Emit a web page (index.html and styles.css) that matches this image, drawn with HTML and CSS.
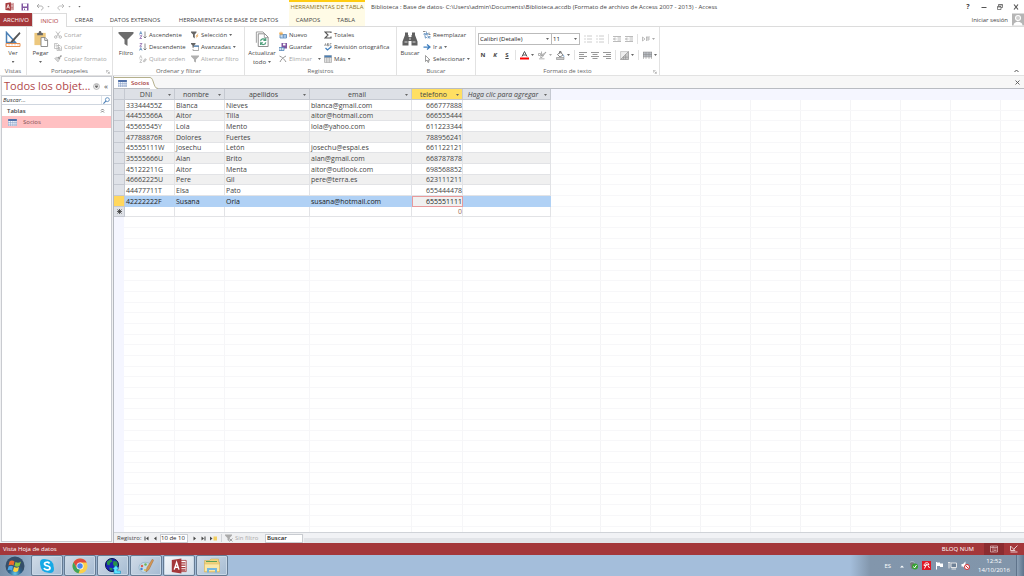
FILE: index.html
```html
<!DOCTYPE html>
<html lang="es">
<head>
<meta charset="utf-8">
<title>Biblioteca - Access</title>
<link rel="stylesheet" href="styles.css">
</head>
<body>
<svg class="defs" aria-hidden="true">
  <symbol id="i-access" viewBox="0 0 20 20"><path d="M12 3h7v14h-7z" fill="#fff" stroke="#a4373a"/><path d="M12 6h6M12 9h6M12 12h6M12 15h6" stroke="#a4373a" stroke-width="1.6"/><path d="M1 2.500l12-2v19l-12-2z" fill="#a4373a"/><path d="M4 14.500l3-9 3 9M5 11.500h4" fill="none" stroke="#fff" stroke-width="1.700"/></symbol>
  <symbol id="i-save" viewBox="0 0 16 16"><path d="M1 1h14v14H1z" fill="#8055a0"/><path d="M4 1h8v6H4z" fill="#fff"/><path d="M4 10h8v5H4z" fill="#fff"/><path d="M6 11h2v3H6z" fill="#8055a0"/></symbol>
  <symbol id="i-undo" viewBox="0 0 16 16"><path d="M6 2L2 6l4 4M2 6h7c7 0 6 7 1 8" fill="none" stroke="#a5a5a5" stroke-width="1.800"/></symbol>
  <symbol id="i-redo" viewBox="0 0 16 16"><path d="M10 2l4 4-4 4M14 6H7c-7 0-6 7-1 8" fill="none" stroke="#b5b5b5" stroke-width="1.800"/></symbol>
  <symbol id="i-view" viewBox="0 0 32 32"><path d="M3 3v20h18z" fill="none" stroke="#4a7fb5" stroke-width="3"/><path d="M29 2L13 19l-3 5 6-2L31 5z" fill="#555"/><path d="M2 25h28v6H2z" fill="#fff" stroke="#e88f50" stroke-width="2"/><path d="M8 26v3M14 26v3M20 26v3M26 26v3" stroke="#e88f50"/></symbol>
  <symbol id="i-paste" viewBox="0 0 32 34"><path d="M2 4h24v26H2z" fill="#edc87e"/><path d="M8 4h3c0-5 6-5 6 0h3v5H8z" fill="#666"/><path d="M16 14h9l5 5v14H16z" fill="#fff" stroke="#888" stroke-width="2"/><path d="M24 14v6h6" fill="none" stroke="#888" stroke-width="2"/></symbol>
  <symbol id="i-cut" viewBox="0 0 16 16"><path d="M4 1l7 10M12 1L5 11" stroke="#aaa" stroke-width="1.500"/><g fill="none" stroke="#aaa" stroke-width="1.500"><circle cx="3.500" cy="12" r="2.500"/><circle cx="12.500" cy="12" r="2.500"/></g></symbol>
  <symbol id="i-copy" viewBox="0 0 16 16"><g fill="#fff" stroke="#aaa" stroke-width="1.300"><path d="M1 1h6l2 2v8H1zM6 5h6l3 3v7H6z"/><path d="M3 4h3M3 6h2M8 9h4M8 11h5M8 13h5"/></g></symbol>
  <symbol id="i-brush" viewBox="0 0 16 16"><path d="M1 7l5-3 5 5-3 5z" fill="#d5d5d5" stroke="#b0b0b0"/><path d="M7 5l3-2 3 3-2 3z" fill="#999"/><path d="M12 4l3-3" stroke="#999" stroke-width="3"/></symbol>
  <symbol id="i-funnel" viewBox="0 0 32 32"><path d="M1 2h30v3L19 17v13l-6-4v-9L1 5z" fill="#6d6d6d"/></symbol>
  <symbol id="i-asc" viewBox="0 0 16 16"><path d="M1 7l2.500-6L6 7M2 5h3" fill="none" stroke="#4a7fb5" stroke-width="1.400"/><path d="M1.500 9.500H6L1.500 15H6" fill="none" stroke="#8055a0" stroke-width="1.400"/><path d="M12 1v13M9 11l3 3 3-3" fill="none" stroke="#666" stroke-width="1.500"/></symbol>
  <symbol id="i-desc" viewBox="0 0 16 16"><path d="M1.500 1H6L1.500 6.500H6" fill="none" stroke="#8055a0" stroke-width="1.400"/><path d="M1 15l2.500-6L6 15M2 13h3" fill="none" stroke="#4a7fb5" stroke-width="1.400"/><path d="M12 1v13M9 11l3 3 3-3" fill="none" stroke="#666" stroke-width="1.500"/></symbol>
  <symbol id="i-unsort" viewBox="0 0 16 16"><path d="M1 7l2.500-6L6 7M1.500 9.500H6L1.500 15H6" fill="none" stroke="#b5b5b5" stroke-width="1.400"/><path d="M8 13l4-6 3 2-4 5z" fill="#ccc" stroke="#b0b0b0"/></symbol>
  <symbol id="i-fsel" viewBox="0 0 16 16"><path d="M0 1h11v2L7.500 7v8L4 12V7L0 3z" fill="#666"/><path d="M14 5l-5 6h3l-3 5 6-7h-3l3-4z" fill="#e8a04a"/></symbol>
  <symbol id="i-fadv" viewBox="0 0 16 16"><path d="M0 0h9v2L6 5v6L3 9V5L0 2z" fill="#666"/><path d="M6 6h9v9H4v-3" fill="#fff" stroke="#777" stroke-width="1.200"/><path d="M6 5h10v2.500H6z" fill="#4a7fb5"/></symbol>
  <symbol id="i-falt" viewBox="0 0 16 16"><path d="M0 1h16v2l-6 6v6l-4-2V9L0 3z" fill="#b0b0b0"/></symbol>
  <symbol id="i-refresh" viewBox="0 0 28 34"><path d="M2 25V2h14l4 4" fill="none" stroke="#999" stroke-width="2"/><path d="M6 6h14l7 7v20H6z" fill="#fff" stroke="#888" stroke-width="2"/><path d="M19 6v8h8" fill="none" stroke="#888" stroke-width="1.500"/><path d="M11 22c0-6 8-7 10-3M22 15v5h-5M22 24c-1 6-8 6-10 2M11 30v-5h5" fill="none" stroke="#4f9f7c" stroke-width="2.500"/></symbol>
  <symbol id="i-new" viewBox="0 0 16 16"><path d="M2 7h13v7H2z" fill="#c9dcf0" stroke="#4a7fb5" stroke-width="1.500"/><path d="M6 10h9M9 8v6" stroke="#4a7fb5"/><path d="M4 1v8M0 5h8M1 2l6 6M7 2L1 8" stroke="#efaa4a" stroke-width="1.400"/></symbol>
  <symbol id="i-saverec" viewBox="0 0 16 16"><path d="M5 0h11v11H5z" fill="#8055a0"/><path d="M8 1h5v4H8z" fill="#fff"/><path d="M0 9h10v6H0z" fill="#fff" stroke="#4a7fb5" stroke-width="1.500"/><path d="M1 12h9M5 9v6" stroke="#4a7fb5"/></symbol>
  <symbol id="i-del" viewBox="0 0 16 16"><path d="M1 2c5 2 10 7 13 12M14 2C8 5 4 9 2 14" fill="none" stroke="#999" stroke-width="2"/></symbol>
  <symbol id="i-sum" viewBox="0 0 16 16"><path d="M14 4V2H2l6 6-6 6h12v-3" fill="none" stroke="#555" stroke-width="2.200"/></symbol>
  <symbol id="i-abc" viewBox="0 0 16 16"><path d="M1 6l2-5 2 5M2 4h2M7 1v5h2V3.500H7V1h2v2M15 1h-3v5h3" fill="none" stroke="#666"/><path d="M3 10l4 4 8-7" fill="none" stroke="#3f7fbf" stroke-width="2.500"/></symbol>
  <symbol id="i-grid" viewBox="0 0 16 16"><path d="M1 1h14v14H1z" fill="#fff" stroke="#888"/><path d="M1 1h14v4H1z" fill="#4a7fb5"/><path d="M1 5h14M1 8h14M1 12h14M5.500 5v10M10.500 5v10" stroke="#888"/></symbol>
  <symbol id="i-find" viewBox="0 0 32 28"><path d="M6 1h6v5h1v4h6V6h1V1h6v5l5 13v8H19v-9h-6v9H1v-8L6 6z" fill="#606060"/><path d="M5 20h6M21 20h6M16 11v5" stroke="#fff" stroke-width="1.500"/></symbol>
  <symbol id="i-replace" viewBox="0 0 16 16"><path d="M2 5h3v3H2zM7 1v7h3V5H7M9 11h2v3H9M15 11h-3v3h3M4 9v4h3M5 11l2 2-2 2" fill="none" stroke="#4a7fb5" stroke-width="1.300"/><path d="M0 1h5M12 3v4h3" stroke="#666" fill="none" stroke-width="1.500"/></symbol>
  <symbol id="i-go" viewBox="0 0 16 16"><path d="M1 8h12M8 3l6 5-6 5" fill="none" stroke="#3f7fbf" stroke-width="2.500"/></symbol>
  <symbol id="i-pick" viewBox="0 0 16 16"><path d="M5 1v12l3-3 2 5 2-1-2-4h4z" fill="#fff" stroke="#777" stroke-width="1.400"/></symbol>
  <symbol id="i-list" viewBox="0 0 16 16"><path d="M1 2h2M1 8h2M1 14h2" stroke="#aaa" stroke-width="2"/><path d="M6 2h10M6 8h10M6 14h10" stroke="#bbb" stroke-width="1.500"/></symbol>
  <symbol id="i-indent" viewBox="0 0 16 16"><path d="M0 3h16M9 6h7M9 10h7M0 13h16M7 8H1M4 5L1 8l3 3" fill="none" stroke="#aaa" stroke-width="1.600"/></symbol>
  <symbol id="i-dir" viewBox="0 0 16 16"><path d="M1 4l5 4-5 4zM9 12V4M12 12V4M8 4h8M16 8h-5" fill="none" stroke="#aaa" stroke-width="1.500"/></symbol>
  <symbol id="i-fontcolor" viewBox="0 0 18 18"><path d="M4 11L9 1l5 10M6 8h6" fill="none" stroke="#555" stroke-width="2"/><path d="M0 13h18v4H0z" fill="#f00"/></symbol>
  <symbol id="i-mark" viewBox="0 0 18 18"><path d="M1 5h4v4H1zM7 1v8h3V5M16 2L8 13H5l1-3z" fill="none" stroke="#999" stroke-width="1.500"/><path d="M2 14h11v3H2z" fill="#ccc"/></symbol>
  <symbol id="i-fill" viewBox="0 0 18 18"><path d="M3 7l6-5 5 6-6 4zM7 5V1h3v4" fill="#fff" stroke="#666" stroke-width="1.600"/><path d="M14 7c3 2 3 4 2 6z" fill="#3f7fbf"/><path d="M1 13h15v4H1z" fill="#ccc" stroke="#777"/></symbol>
  <symbol id="i-al" viewBox="0 0 16 16"><path d="M0 3h16M0 7h10M0 11h16M0 15h10" stroke="#777" stroke-width="1.500"/></symbol>
  <symbol id="i-ac" viewBox="0 0 16 16"><path d="M0 3h16M3 7h10M0 11h16M3 15h10" stroke="#777" stroke-width="1.500"/></symbol>
  <symbol id="i-ar" viewBox="0 0 16 16"><path d="M0 3h16M6 7h10M0 11h16M6 15h10" stroke="#777" stroke-width="1.500"/></symbol>
  <symbol id="i-alt" viewBox="0 0 16 16"><path d="M1 1h14v14H1z" fill="#eee" stroke="#aaa"/><path d="M1 15L15 1v14z" fill="#ccc" stroke="#888"/><path d="M6 10v5M10 6v9M6 11h9" fill="none" stroke="#888"/></symbol>
  <symbol id="i-lines" viewBox="0 0 18 16"><path d="M0 1h18v10H0z" fill="#b8bcc2"/><path d="M0 1h18M0 6h18M0 11h18M6 1v14M12 1v14M1 1v14M17 1v14" stroke="#888"/></symbol>
  <symbol id="i-launch" viewBox="0 0 12 12"><path d="M1 8V1h7M4 4l6 6M10 5v5H5" fill="none" stroke="#888" stroke-width="1.500"/></symbol>
  <symbol id="i-table" viewBox="0 0 18 14"><path d="M0 0h18v14H0z" fill="#f4f8fd"/><path d="M0 0h18v4H0z" fill="#4f6fa8"/><path d="M0 7h18M0 10.500h18M5 4v10M9.500 4v10M14 4v10M.5 0v14M0 13.500h18M17.500 0v14" stroke="#8199c2"/></symbol>
  <symbol id="i-search" viewBox="0 0 16 16"><circle cx="10" cy="6" r="4.500" fill="none" stroke="#4a7fb5" stroke-width="1.800"/><path d="M7 9l-6 6" stroke="#4a7fb5" stroke-width="2.500"/></symbol>
  <symbol id="i-user" viewBox="0 0 24 24"><path d="M0 0h24v24H0z" fill="#b5b5b5"/><circle cx="12" cy="9" r="6" fill="#fff"/><path d="M3 24c0-10 18-10 18 0z" fill="#fff"/><circle cx="12" cy="9" r="4" fill="#d0d0d0"/></symbol>
</svg>

<div class="app">
  <header class="titlebar">
    <div class="quick">
      <svg class="ic s9"><use href="#i-access"/></svg>
      <button aria-label="Guardar base de datos"><svg class="ic s8"><use href="#i-save"/></svg></button>
      <button aria-label="Deshacer"><svg class="ic s8"><use href="#i-undo"/></svg><i class="caret pale"></i></button>
      <button aria-label="Rehacer"><svg class="ic s8"><use href="#i-redo"/></svg><i class="caret pale"></i></button>
      <button aria-label="Personalizar"><i class="caret"></i></button>
    </div>
    <div class="context">HERRAMIENTAS DE TABLA</div>
    <h1>Biblioteca : Base de datos- C:\Users\admin\Documents\Biblioteca.accdb (Formato de archivo de Access 2007 - 2013) - Access</h1>
    <div class="winbtns">
      <button>?</button>
      <button aria-label="Minimizar"><svg class="ic s6" viewBox="0 0 12 12"><path d="M1 7h10" stroke="#555" stroke-width="2"/></svg></button>
      <button aria-label="Restaurar"><svg class="ic s6" viewBox="0 0 12 12"><path d="M3 4V1h8v6H8M1 5h7v6H1zM1 6h7M3 2h8" fill="none" stroke="#555" stroke-width="1.400"/></svg></button>
      <button aria-label="Cerrar"><svg class="ic s6" viewBox="0 0 12 12"><path d="M2 1l8 10M10 1L2 11" stroke="#555" stroke-width="2.200"/></svg></button>
    </div>
  </header>

  <nav class="tabs">
    <button class="tab file">ARCHIVO</button>
    <button class="tab active">INICIO</button>
    <button class="tab create">CREAR</button>
    <button class="tab external">DATOS EXTERNOS</button>
    <button class="tab tools">HERRAMIENTAS DE BASE DE DATOS</button>
    <div class="tabset"><button class="tab">CAMPOS</button><button class="tab">TABLA</button></div>
    <div class="signin"><a href="#">Iniciar sesión</a><svg class="ic s12"><use href="#i-user"/></svg></div>
  </nav>

  <div class="ribbon">
    <section class="group g-views">
      <div class="body"><button class="big"><svg class="ic s16"><use href="#i-view"/></svg>Ver<i class="caret"></i></button></div>
      <h2>Vistas</h2>
    </section>
    <section class="group g-clip">
      <div class="body">
        <button class="big"><svg class="ic s16"><use href="#i-paste"/></svg>Pegar<i class="caret"></i></button>
        <div class="stack">
          <button class="small off"><svg class="ic s8"><use href="#i-cut"/></svg>Cortar</button>
          <button class="small off"><svg class="ic s8"><use href="#i-copy"/></svg>Copiar</button>
          <button class="small off"><svg class="ic s8"><use href="#i-brush"/></svg>Copiar formato</button>
        </div>
      </div>
      <h2>Portapapeles</h2><svg class="ic launch"><use href="#i-launch"/></svg>
    </section>
    <section class="group g-sort">
      <div class="body">
        <button class="big"><svg class="ic s16"><use href="#i-funnel"/></svg>Filtro</button>
        <div class="stack">
          <button class="small"><svg class="ic s8"><use href="#i-asc"/></svg>Ascendente</button>
          <button class="small"><svg class="ic s8"><use href="#i-desc"/></svg>Descendente</button>
          <button class="small off"><svg class="ic s8"><use href="#i-unsort"/></svg>Quitar orden</button>
        </div>
        <div class="stack">
          <button class="small"><svg class="ic s8"><use href="#i-fsel"/></svg>Selección<i class="caret"></i></button>
          <button class="small"><svg class="ic s8"><use href="#i-fadv"/></svg>Avanzadas<i class="caret"></i></button>
          <button class="small off"><svg class="ic s8"><use href="#i-falt"/></svg>Alternar filtro</button>
        </div>
      </div>
      <h2>Ordenar y filtrar</h2>
    </section>
    <section class="group g-rec">
      <div class="body">
        <button class="big"><svg class="ic s16"><use href="#i-refresh"/></svg>Actualizar<span class="more">todo<i class="caret"></i></span></button>
        <div class="stack">
          <button class="small"><svg class="ic s8"><use href="#i-new"/></svg>Nuevo</button>
          <button class="small"><svg class="ic s8"><use href="#i-saverec"/></svg>Guardar</button>
          <button class="small off"><svg class="ic s8"><use href="#i-del"/></svg>Eliminar<i class="caret wide"></i></button>
        </div>
        <div class="stack">
          <button class="small"><svg class="ic s8"><use href="#i-sum"/></svg>Totales</button>
          <button class="small"><svg class="ic s8"><use href="#i-abc"/></svg>Revisión ortográfica</button>
          <button class="small"><svg class="ic s8"><use href="#i-grid"/></svg>Más<i class="caret"></i></button>
        </div>
      </div>
      <h2>Registros</h2>
    </section>
    <section class="group g-find">
      <div class="body">
        <button class="big"><svg class="ic s16"><use href="#i-find"/></svg>Buscar</button>
        <div class="stack">
          <button class="small"><svg class="ic s8"><use href="#i-replace"/></svg>Reemplazar</button>
          <button class="small"><svg class="ic s8"><use href="#i-go"/></svg>Ir a<i class="caret"></i></button>
          <button class="small"><svg class="ic s8"><use href="#i-pick"/></svg>Seleccionar<i class="caret"></i></button>
        </div>
      </div>
      <h2>Buscar</h2>
    </section>
    <section class="group g-text">
      <div class="format">
        <div class="line">
          <span class="combo font"><select aria-label="Fuente"><option>Calibri (Detalle)</option></select><i class="caret"></i></span>
          <span class="combo size"><select aria-label="Tamaño"><option>11</option></select><i class="caret"></i></span>
          <button aria-label="Viñetas"><svg class="ic s8"><use href="#i-list"/></svg></button>
          <button aria-label="Numeración"><svg class="ic s8"><use href="#i-list"/></svg></button>
          <span class="sep"></span>
          <button aria-label="Reducir sangría"><svg class="ic s8"><use href="#i-indent"/></svg></button>
          <button aria-label="Aumentar sangría"><svg class="ic s8"><use href="#i-indent"/></svg></button>
          <span class="sep"></span>
          <button aria-label="Dirección"><svg class="ic s8"><use href="#i-dir"/></svg><i class="caret pale"></i></button>
        </div>
        <div class="line low">
          <button class="glyph">N</button><button class="glyph k">K</button><button class="glyph s">S</button>
          <span class="sep"></span>
          <button aria-label="Color de fuente"><svg class="ic s9"><use href="#i-fontcolor"/></svg><i class="caret"></i></button>
          <button aria-label="Resaltado"><svg class="ic s9"><use href="#i-mark"/></svg><i class="caret pale"></i></button>
          <button aria-label="Color de fondo"><svg class="ic s9"><use href="#i-fill"/></svg><i class="caret"></i></button>
          <span class="sep"></span>
          <button aria-label="Izquierda"><svg class="ic s8"><use href="#i-al"/></svg></button>
          <button aria-label="Centro"><svg class="ic s8"><use href="#i-ac"/></svg></button>
          <button aria-label="Derecha"><svg class="ic s8"><use href="#i-ar"/></svg></button>
          <span class="sep"></span>
          <button aria-label="Color alterno"><svg class="ic s9"><use href="#i-alt"/></svg><i class="caret"></i></button>
          <span class="sep"></span>
          <button aria-label="Líneas"><svg class="ic s9"><use href="#i-lines"/></svg><i class="caret"></i></button>
        </div>
      </div>
      <h2>Formato de texto</h2><svg class="ic launch"><use href="#i-launch"/></svg>
    </section>
    <button class="collapse" aria-label="Contraer"><svg class="ic s5" viewBox="0 0 10 10"><path d="M1 8l4-4 4 4" fill="none" stroke="#555" stroke-width="2"/></svg></button>
  </div>

  <main class="work">
    <aside class="pane">
      <div class="panehead">
        <h2>Todos los objet...</h2>
        <button aria-label="Opciones"><svg class="ic s7" viewBox="0 0 14 14"><circle cx="7" cy="7" r="6" fill="#eee" stroke="#888"/><path d="M4 4h6M4 6h6l-3 4z" fill="#666" stroke="#666"/></svg></button>
        <button class="fold">«</button>
      </div>
      <div class="search"><input type="text" aria-label="Buscar objetos" placeholder="Buscar..."><button aria-label="Buscar"><svg class="ic s7"><use href="#i-search"/></svg></button></div>
      <div class="section">Tablas<svg class="ic s5" viewBox="0 0 10 10"><path d="M2 5l3-3 3 3M2 9l3-3 3 3" fill="none" stroke="#555" stroke-width="1.500"/></svg></div>
      <a class="object" href="#"><svg class="ic tbl"><use href="#i-table"/></svg>Socios</a>
    </aside>

    <section class="doc">
      <div class="doctabs">
        <button class="doctab"><svg class="ic tbl"><use href="#i-table"/></svg>Socios</button>
        <svg class="slope" viewBox="0 0 8 12"><path d="M0 0c4 0 3 12 8 12H0z" fill="#fff"/><path d="M0 .5c4 0 3 11 8 11" fill="none" stroke="#b5b08c"/></svg>
        <button class="docclose" aria-label="Cerrar Socios"><svg class="ic s5" viewBox="0 0 10 10"><path d="M1 1l8 8M9 1L1 9" stroke="#555" stroke-width="1.800"/></svg></button>
      </div>
      <div class="sheet">
        <table>
          <colgroup><col class="c-sel"><col class="c-50"><col class="c-50"><col class="c-last"><col class="c-mail"><col class="c-tel"><col class="c-add"></colgroup>
          <thead><tr>
            <th class="corner"></th>
            <th><span>DNI</span><i class="caret"></i></th>
            <th><span>nombre</span><i class="caret"></i></th>
            <th><span>apellidos</span><i class="caret"></i></th>
            <th><span>email</span><i class="caret"></i></th>
            <th class="current"><span>telefono</span><i class="caret"></i></th>
            <th class="add"><span>Haga clic para agregar</span><i class="caret"></i></th>
          </tr></thead>
          <tbody>
            <tr><th></th><td>33344455Z</td><td>Blanca</td><td>Nieves</td><td>blanca@gmail.com</td><td>666777888</td><td></td></tr>
            <tr><th></th><td>44455566A</td><td>Aitor</td><td>Tilla</td><td>aitor@hotmail.com</td><td>666555444</td><td></td></tr>
            <tr><th></th><td>45565545Y</td><td>Lola</td><td>Mento</td><td>lola@yahoo.com</td><td>611223344</td><td></td></tr>
            <tr><th></th><td>47788876R</td><td>Dolores</td><td>Fuertes</td><td></td><td>788956241</td><td></td></tr>
            <tr><th></th><td>45555111W</td><td>Josechu</td><td>Letón</td><td>josechu@espai.es</td><td>661122121</td><td></td></tr>
            <tr><th></th><td>35555666U</td><td>Alan</td><td>Brito</td><td>alan@gmail.com</td><td>668787878</td><td></td></tr>
            <tr><th></th><td>45122211G</td><td>Aitor</td><td>Menta</td><td>aitor@outlook.com</td><td>698568852</td><td></td></tr>
            <tr><th></th><td>46662225U</td><td>Pere</td><td>Gil</td><td>pere@terra.es</td><td>623111211</td><td></td></tr>
            <tr><th></th><td>44477711T</td><td>Elsa</td><td>Pato</td><td></td><td>655444478</td><td></td></tr>
            <tr class="selected"><th></th><td>42222222F</td><td>Susana</td><td>Oria</td><td>susana@hotmail.com</td><td class="focus">655551111</td><td></td></tr>
            <tr class="blank"><th><svg class="ic s5" viewBox="0 0 10 10"><path d="M5 0v10M0 5h10M1 1l8 8M9 1L1 9" stroke="#333" stroke-width="1.500"/></svg></th><td></td><td></td><td></td><td></td><td>0</td><td></td></tr>
          </tbody>
        </table>
      </div>
      <div class="records">
        <span class="reclabel">Registro:</span>
        <button aria-label="Primero"><svg class="ic s5" viewBox="0 0 10 10"><path d="M1 1h2v8H1zM9 1v8L4 5z" fill="#444"/></svg></button>
        <button aria-label="Anterior"><svg class="ic s5" viewBox="0 0 10 10"><path d="M7 1v8L2 5z" fill="#444"/></svg></button>
        <input class="pos" type="text" aria-label="Registro actual" value="10 de 10">
        <button aria-label="Siguiente"><svg class="ic s5" viewBox="0 0 10 10"><path d="M3 1v8l5-4z" fill="#444"/></svg></button>
        <button aria-label="Último"><svg class="ic s5" viewBox="0 0 10 10"><path d="M7 1h2v8H7zM1 1v8l5-4z" fill="#444"/></svg></button>
        <button aria-label="Nuevo registro"><svg class="ic s7" viewBox="0 0 14 10"><path d="M0 1v8l5-4z" fill="#444"/><path d="M7 1h7v8H7z" fill="#f3cf61"/></svg></button>
        <span class="nofilter"><svg class="ic s8" viewBox="0 0 16 16"><path d="M0 1h14v2L9 8v7l-4-3V8L0 3z" fill="#aaa"/><path d="M9 9l6 6M15 9l-6 6" stroke="#888" stroke-width="1.500"/></svg>Sin filtro</span>
        <input class="find" type="text" aria-label="Buscar en registros" value="Buscar">
        <div class="scroll"></div>
      </div>
    </section>
  </main>

  <footer class="status">
    <span>Vista Hoja de datos</span>
    <span class="lock">BLOQ NUM</span>
    <button class="on" aria-label="Vista Hoja de datos"><svg class="ic s8" viewBox="0 0 16 16"><path d="M1 2h14v12H1zM1 5h14M6 2v12M8 8h5M8 11h5" fill="none" stroke="#e8c8c9" stroke-width="1.300"/></svg></button>
    <button aria-label="Vista Diseño"><svg class="ic s8" viewBox="0 0 16 16"><path d="M1 2v9h9zM15 1L7 9M1 14h14" fill="none" stroke="#e8c8c9" stroke-width="2"/></svg></button>
  </footer>

  <div class="taskbar">
    <button class="start" aria-label="Inicio"><svg viewBox="0 0 40 40"><defs><radialGradient id="orb" cx=".5" cy=".9"><stop offset="0" stop-color="#65c7e8"/><stop offset=".6" stop-color="#2d638d"/><stop offset="1" stop-color="#344e69"/></radialGradient></defs><circle cx="20" cy="20" r="19" fill="url(#orb)"/><path d="M9 11c4-3 7-2 10 0l-2 8c-3-2-6-2-10 0z" fill="#ef6b30"/><path d="M21 12c4 2 7 2 11-1l-3 9c-3 2-6 2-10 0z" fill="#8bc63f"/><path d="M7 21c4-2 6-2 9 0l-2 8c-3-2-6-2-9 0z" fill="#4da7e8"/><path d="M18 22c4 2 6 2 10 0l-2 8c-4 3-7 2-10 0z" fill="#ffd33d"/></svg></button>
    <button class="app-btn" aria-label="Skype"><svg viewBox="0 0 32 32"><circle cx="16" cy="16" r="13" fill="#16a9e6"/><circle cx="10" cy="10" r="8" fill="#16a9e6"/><circle cx="22" cy="22" r="8" fill="#16a9e6"/><path d="M21 11c-2-4-10-3-10 1 0 5 11 2 11 8 0 5-10 5-12 0" fill="none" stroke="#fff" stroke-width="3.500"/></svg></button>
    <button class="app-btn" aria-label="Chrome"><svg viewBox="0 0 32 32"><circle cx="16" cy="16" r="15" fill="#fbd04b"/><path d="M3 8.500A15 15 0 0 1 29.500 9H16l-6.500 11z" fill="#df4b3f"/><path d="M3 8.500l6.500 11.500L16 23l-3 7.700A15 15 0 0 1 3 8.500z" fill="#3fa35b"/><circle cx="16" cy="16" r="7" fill="#fff"/><circle cx="16" cy="16" r="5.500" fill="#4b87ee"/></svg></button>
    <button class="app-btn" aria-label="Red"><svg viewBox="0 0 32 32"><circle cx="14" cy="14" r="13" fill="#1a20b5" stroke="#06104a" stroke-width="2"/><path d="M4 7l8-5 3 5-5 3-1 5-5-2zM17 6l7 1 2 8-7 3-3-6zM8 19l6 1 1 6-5-2z" fill="#26924a"/><path d="M22 15l6 7h-4v4h7v5H18v-9h-3z" fill="#5de4ff" stroke="#087eb0"/></svg></button>
    <button class="app-btn" aria-label="Paint"><svg viewBox="0 0 32 32"><path d="M2 19c0-8 10-13 19-9 7 4 3 9-1 10-3 1 1 6-4 8-7 2-14-2-14-9z" fill="#c5dce9" stroke="#7ba0b5"/><circle cx="8" cy="16" r="2.500" fill="#df5e51"/><circle cx="15" cy="13" r="2.500" fill="#72b557"/><circle cx="7" cy="22" r="2.500" fill="#4785ce"/><circle cx="14" cy="24" r="2" fill="#e5b93c"/><path d="M29 2L18 19l-2 9 6-5L31 5z" fill="#d59652" stroke="#9e7145"/></svg></button>
    <button class="app-btn running" aria-label="Access"><svg viewBox="0 0 20 20"><use href="#i-access"/></svg></button>
    <button class="app-btn" aria-label="Explorador"><svg viewBox="0 0 32 32"><path d="M1 5h10l3-3h15v6h2v20H1z" fill="#f2d27b" stroke="#c8a64f"/><path d="M4 7h22" stroke="#5aa158" stroke-width="2"/><path d="M1 12h30v15H1z" fill="#fae8a6" stroke="#d6b562"/><path d="M8 29v-7h16v7" fill="none" stroke="#75b7df" stroke-width="4"/></svg></button>
    <div class="tray">
      <span class="lang">ES</span>
      <svg class="ic s6" viewBox="0 0 12 12"><path d="M2 9l4-4 4 4z" fill="#fff"/></svg>
      <svg class="ic s9" viewBox="0 0 18 18"><path d="M2 3h8v12H4z" fill="#777"/><path d="M2 3l4-3 5 3" stroke="#ddd" fill="none"/><circle cx="12" cy="11" r="6" fill="#35a331"/><path d="M9 11l2 3 4-6" fill="none" stroke="#fff" stroke-width="2"/></svg>
      <svg class="ic s9" viewBox="0 0 18 18"><path d="M0 0h18v18H0z" fill="#e01824"/><path d="M4 9c1-7 9-7 10-2zM9 6l-4 9M12 9l3 5" fill="none" stroke="#fff" stroke-width="2"/></svg>
      <svg class="ic s9" viewBox="0 0 18 18"><path d="M3 2v15" stroke="#fff" stroke-width="2"/><path d="M4 3h6v2h6v7h-6v-2H4z" fill="#fff"/></svg>
      <svg class="ic s9" viewBox="0 0 18 18"><path d="M6 4h11v9H6zM2 3v12M0 3h5M7 16h9" fill="#6d8096" stroke="#eee" stroke-width="1.800"/></svg>
      <svg class="ic s9" viewBox="0 0 18 18"><path d="M1 6h3l5-5v15l-5-5H1z" fill="#fff"/><circle cx="12" cy="12" r="5" fill="#fff" stroke="#d82e32" stroke-width="2"/><path d="M9 9l6 6" stroke="#d82e32" stroke-width="2"/></svg>
      <div class="clock"><span>12:52</span><span>14/10/2016</span></div>
      <button class="desktop" aria-label="Mostrar escritorio"></button>
    </div>
  </div>
</div>
</body>
</html>
```
FILE: styles.css
```css
* { box-sizing: border-box; }
body { margin: 0; font: 6px/8px "Open Sans", "Noto Sans", sans-serif; color: #444; background: #fff; }
h1, h2 { margin: 0; font: inherit; }
button, input, select { margin: 0; padding: 0; border: 0; border-radius: 0; background: none; font: inherit; color: inherit; }
button { display: inline-flex; align-items: center; justify-content: center; gap: 2px; white-space: nowrap; }
a { color: inherit; text-decoration: none; }
.defs { display: none; }
.ic { flex: none; display: block; }
.s5 { width: 5px; height: 5px; }
.s6 { width: 6px; height: 6px; }
.s7 { width: 7px; height: 7px; }
.s8 { width: 8px; height: 8px; }
.s9 { width: 9px; height: 9px; }
.s12 { width: 12px; height: 13px; }
.s16 { width: 16px; height: 16px; }
.tbl { width: 9px; height: 7px; }
.caret { flex: none; width: 3px; height: 2px; background: #666; clip-path: polygon(0 0, 100% 0, 50% 100%); }
.pale { background: #aaa; }
.wide { margin-left: 4px; }
.app { display: flex; flex-direction: column; height: 100vh; overflow: hidden; }

.titlebar { display: grid; grid-template-columns: 289px 76px 1fr auto; height: 13px; align-items: center; }
.quick { display: flex; align-items: center; gap: 7px; padding-left: 5px; }
.quick button { gap: 3px; }
.context { align-self: stretch; border-top: 2px solid #fc1; background: #fffbe6; color: #8e7528; text-align: center; line-height: 10px; white-space: nowrap; }
.titlebar h1 { padding-left: 6px; white-space: nowrap; }
.winbtns { display: flex; gap: 10px; padding-right: 5px; }
.winbtns button { width: 6px; font-size: 7px; font-weight: 700; }

.tabs { display: flex; height: 14px; border-bottom: 1px solid #dcdcdc; }
.tab { height: 13px; }
.file { width: 32px; background: #a4373a; color: #fff; }
.active { width: 35px; height: 14px; border: 1px solid #dcdcdc; border-bottom: 0; background: #fff; color: #b03a3d; }
.create { width: 34px; }
.external { width: 68px; }
.tools { width: 119px; margin-right: 1px; }
.tabset { display: flex; width: 76px; background: #fffbe6; }
.tabset .tab { flex: 1; }
.signin { display: flex; align-items: center; gap: 4px; margin-left: auto; }

.ribbon { display: flex; height: 49px; border-bottom: 1px solid #e2e2e2; }
.group { position: relative; display: flex; flex-direction: column; border-right: 1px solid #e2e2e2; }
.group h2 { margin-top: auto; text-align: center; color: #666; }
.launch { position: absolute; right: 2px; bottom: 1px; width: 4px; height: 4px; }
.body { display: flex; padding-top: 2px; }
.big { flex-direction: column; justify-content: flex-start; gap: 2px; padding-top: 2px; height: 37px; }
.big .caret { margin-top: 2px; }
.more { display: flex; gap: 2px; align-items: center; line-height: 6px; }
.more .caret { margin-top: 0; }
.stack { display: flex; flex-direction: column; align-items: flex-start; }
.small { height: 12px; }
.off { color: #a5a5a5; }
.g-views { width: 27px; }
.g-views .big { width: 26px; }
.g-clip { width: 86px; }
.g-clip .big { width: 27px; }
.g-sort { width: 132px; }
.g-sort .big { width: 26px; }
.g-sort .big + .stack { width: 52px; }
.g-rec { width: 152px; }
.g-rec .big { width: 34px; }
.g-rec .big + .stack { width: 45px; }
.g-find { width: 79px; }
.g-find .big { width: 26px; }
.g-text { width: 184px; }
.format { padding: 5px 0 0 2px; }
.line { display: flex; align-items: center; gap: 4px; height: 14px; }
.low { margin-top: 2px; padding-left: 1px; }
.combo { display: flex; align-items: center; height: 12px; border: 1px solid #bbb; padding: 0 2px 0 1px; }
.combo select { appearance: none; flex: 1; min-width: 0; height: 10px; color: #222; }
.font { width: 74px; }
.size { width: 29px; margin-left: -5px; }
.sep { width: 1px; height: 10px; background: #e2e2e2; }
.glyph { width: 8px; font-weight: 700; }
.k { font-style: italic; }
.s { text-decoration: underline; }
.collapse { margin-left: auto; align-self: flex-end; padding: 0 5px 2px 0; }

.work { display: flex; flex: 1; min-height: 0; background: #f0f1f3; }
.pane { width: 111px; margin: 0 1px 1px; background: #fff; border: 1px solid #c9cbd0; }
.panehead { display: flex; align-items: center; height: 18px; gap: 4px; padding: 0 3px 0 2px; }
.panehead h2 { flex: 1; min-width: 0; font-size: 11px; line-height: 16px; color: #b0484a; white-space: nowrap; }
.fold { font-size: 8px; }
.search { display: flex; height: 10px; border: 1px solid #cfd6df; border-width: 1px 0; }
.search input { flex: 1; min-width: 0; padding: 0 1px; font-style: italic; }
.search input::placeholder { color: #333; }
.search button { width: 10px; border-left: 1px solid #dde3ea; }
.section { display: flex; align-items: center; justify-content: space-between; height: 11px; padding: 0 6px 0 5px; font-weight: 600; }
.object { display: flex; align-items: center; gap: 6px; height: 12px; padding-left: 6px; background: #ffc0c2; color: #7b5052; }

.doc { display: flex; flex-direction: column; flex: 1; min-width: 0; border-left: 1px solid #b5b9c0; }
.doctabs { display: flex; height: 13px; padding-top: 1px; background: #f7f7f7; border-bottom: 1px solid #b9bcc2; }
.doctab { gap: 4px; padding: 0 1px 0 4px; background: #fff; border-top: 1px solid #b5b08c; color: #a4373a; font-weight: 600; }
.slope { width: 8px; height: 12px; }
.docclose { margin-left: auto; padding-right: 4px; }
.sheet { flex: 1; min-height: 0; overflow: hidden; background:
  linear-gradient(#f5f6ff, #f5f6ff) 0 0 / 100% 11px no-repeat,
  linear-gradient(#f5f6ff, #f5f6ff) 0 0 / 10px 100% no-repeat,
  linear-gradient(#f6f6f8, #f6f6f8) 60px 0 / 1px 100% no-repeat,
  linear-gradient(#f6f6f8, #f6f6f8) 110px 0 / 1px 100% no-repeat,
  linear-gradient(#f6f6f8, #f6f6f8) 195px 0 / 1px 100% no-repeat,
  linear-gradient(#f6f6f8, #f6f6f8) 297px 0 / 1px 100% no-repeat,
  linear-gradient(#f6f6f8, #f6f6f8) 348px 0 / 1px 100% no-repeat,
  repeating-linear-gradient(transparent 0 10px, #f7f7f9 10px 11px, transparent 11px 21px, #f7f7f9 21px 22px, transparent 22px 31px, #f7f7f9 31px 32px),
  repeating-linear-gradient(90deg, #f4f4f6 0 1px, transparent 1px 50px) right 0 / calc(100% - 436px) 100% no-repeat,
  #fff; }
table { table-layout: fixed; border-collapse: separate; border-spacing: 0; width: 437px; font-size: 7px; line-height: 9px; }
.c-sel { width: 11px; }
.c-50 { width: 50px; }
.c-last { width: 85px; }
.c-mail { width: 102px; }
.c-tel { width: 51px; }
.c-add { width: 88px; }
th, td { height: 11px; padding: 0 1px; border: solid #e2e3e6; border-width: 0 1px 1px 0; white-space: nowrap; text-align: left; font-weight: 400; }
tbody tr:nth-child(3n+2) > * { height: 10px; }
thead th { position: relative; background: #dde0e6; border-color: #c5c9d1; text-align: center; padding-right: 8px; }
thead .caret { position: absolute; right: 3px; top: 5px; }
thead .current { background: #ffdf62; }
.add { font-style: italic; }
tbody th { background: #dfe2e8; border-color: #c5c9d1; padding: 0 3px; }
tbody td { background: #fff; }
tbody tr:nth-child(even) td { background: #f0f0f0; }
tbody td:nth-child(6) { text-align: right; padding: 0; }
tbody tr.selected td { background: #b0d1f5; border-color: #b0d1f5; color: #222; }
tbody .selected th { background: #ffd75e; }
tbody tr.selected td.focus { background: #f0f0f0; border-color: #e89a9c; box-shadow: inset 1px 1px #e89a9c; }
tbody .blank td:nth-child(6) { color: #a06b50; }

.records { display: flex; align-items: center; height: 11px; border-top: 1px solid #d0d3d8; background: #eff0f2; gap: 4px; padding-left: 3px; }
.reclabel { width: 23px; }
.records input { height: 9px; background: #fff; border: 1px solid #c9ccd1; color: #222; }
.records .pos { width: 28px; margin-left: -2px; }
.records .find { width: 38px; padding-left: 1px; font-weight: 600; }
.nofilter { display: flex; gap: 2px; width: 40px; padding-left: 3px; border-left: 1px solid #d0d3d8; color: #aaa; white-space: nowrap; }
.scroll { flex: 1; align-self: stretch; margin-left: -3px; background: linear-gradient(#f1f2f5 50%, #e2e4e8 50%); }

.status { display: flex; align-items: center; height: 12px; background: #a4373a; color: #fff; padding-left: 3px; }
.lock { margin-left: auto; padding-right: 10px; }
.status button { width: 20px; height: 12px; }
.status .on { background: #8b2c30; }

.taskbar { display: flex; height: 21px; background: linear-gradient(90deg, #7890a9 0, #94adc8 32px, #a4bedb 220px, #a4bedb 83%, #8296ac 85%, #8195aa); }
.start { width: 30px; }
.start svg { width: 20px; height: 20px; }
.app-btn { width: 32px; margin: 0 0 0 1px; border: 1px solid #657b93; border-radius: 2px; background: linear-gradient(135deg, #d0dbe7, #a5bbd2); box-shadow: inset 0 0 0 1px #c8d7e6; }
.app-btn svg { width: 16px; height: 16px; }
.running { background: linear-gradient(135deg, #f4f7fa, #d0dce8); }
.tray { display: flex; align-items: center; gap: 4px; margin-left: auto; color: #fff; }
.lang { margin-right: 4px; }
.clock { display: flex; flex-direction: column; align-items: center; width: 36px; margin-left: 2px; line-height: 9px; white-space: nowrap; }
.desktop { width: 8px; height: 21px; border-left: 1px solid #5f738a; background: linear-gradient(90deg, #8ea2b7, #5d738b); }
```
